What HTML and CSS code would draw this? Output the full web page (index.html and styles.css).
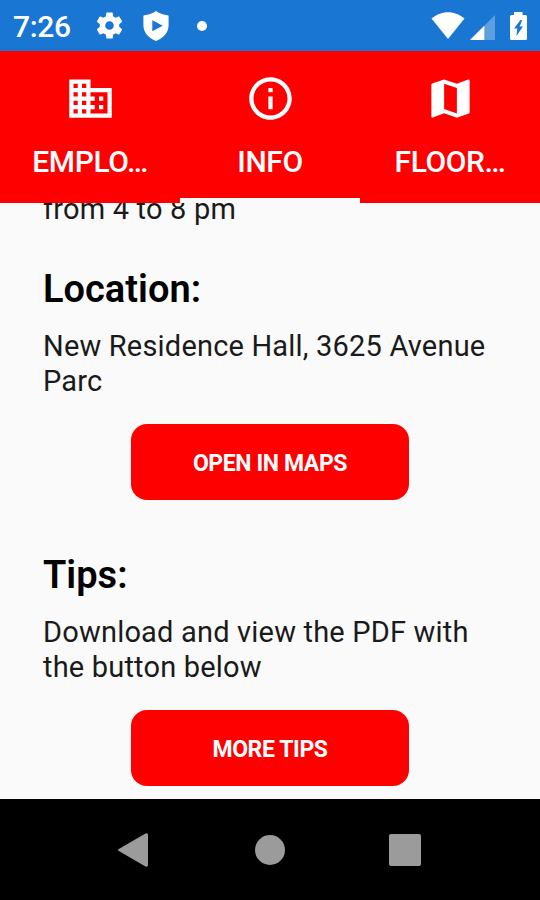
FILE: index.html
```html
<!DOCTYPE html>
<html lang="en">
  <head>
    <meta charset="UTF-8" />
    <meta name="viewport" content="width=device-width, initial-scale=1.0" />
    <title>Info</title>
    <link rel="stylesheet" href="styles.css">
  </head>
  <body>
    <header class="status-bar">
      <span class="clock">7:26</span>
      <svg class="icon-gear" viewBox="2 2 20 20">
        <path fill-rule="evenodd" d="M19.14 12.94c.04-.3.06-.61.06-.94 0-.32-.02-.64-.07-.94l2.03-1.58c.18-.14.23-.41.12-.61l-1.92-3.32c-.12-.22-.37-.29-.59-.22l-2.39.96c-.5-.38-1.03-.7-1.62-.94l-.36-2.54c-.04-.24-.24-.41-.48-.41h-3.84c-.24 0-.43.17-.47.41l-.36 2.54c-.59.24-1.13.57-1.62.94l-2.39-.96c-.22-.08-.47 0-.59.22L2.74 8.87c-.12.21-.08.47.12.61l2.03 1.58c-.05.3-.09.63-.09.94s.02.64.07.94l-2.03 1.58c-.18.14-.23.41-.12.61l1.92 3.32c.12.22.37.29.59.22l2.39-.96c.5.38 1.03.7 1.62.94l.36 2.54c.05.24.24.41.48.41h3.84c.24 0 .44-.17.47-.41l.36-2.54c.59-.24 1.13-.56 1.62-.94l2.39.96c.22.08.47 0 .59-.22l1.92-3.32c.12-.22.07-.47-.12-.61l-2.01-1.58zM12 15.2a3.2 3.2 0 1 1 0-6.4 3.2 3.2 0 0 1 0 6.4z" />
      </svg>
      <svg class="icon-shield" viewBox="0 0 26 30">
        <path fill-rule="evenodd" d="M13 0C9.500 2.500 5 4 1.200 4.200Q.4 4.300.4 5.200V14c0 7.500 5 13 12.600 16 7.600-3 12.600-8.500 12.600-16V5.200q0-.9-.8-1C21 4 16.500 2.500 13 0zM9.300 9.200 19.800 14.700 9.300 20.200z" />
      </svg>
      <span class="dot"></span>
      <div class="status-right">
        <svg class="icon-wifi" viewBox="0 0 34 27">
          <path d="M17 27 .5 6.500C5 2.500 11 .2 17 .2s12 2.300 16.500 6.300z" />
        </svg>
        <svg class="icon-signal" viewBox="0 0 25 25">
          <path class="faded" d="M25 0V25H0z" />
          <path d="M14.300 10.700V25H0z" />
        </svg>
        <svg class="icon-battery" viewBox="0 0 17 28">
          <path fill-rule="evenodd" d="M4 0h8.500v3H15.500Q17 3 17 4.500V26.500Q17 28 15.500 28H1.500Q0 28 0 26.500V4.500Q0 3 1.500 3H4zM10.500 8 4 16.500H7.300L6.400 24 13 14.500H9.600L12.200 8z" />
        </svg>
      </div>
    </header>

    <nav class="tabs">
      <a class="tab">
        <svg viewBox="0 0 24 24">
          <path d="M12 7V3H2v18h20V7H12zM6 19H4v-2h2v2zm0-4H4v-2h2v2zm0-4H4V9h2v2zm0-4H4V5h2v2zm4 12H8v-2h2v2zm0-4H8v-2h2v2zm0-4H8V9h2v2zm0-4H8V5h2v2zm10 12h-8v-2h2v-2h-2v-2h2v-2h-2V9h8v10zm-2-8h-2v2h2v-2zm0 4h-2v2h2v-2z" />
        </svg>
        <span>EMPLO…</span>
      </a>
      <a class="tab active">
        <svg viewBox="0 0 24 24">
          <path d="M11 7h2v2h-2zm0 4h2v6h-2zm1-9C6.480 2 2 6.480 2 12s4.480 10 10 10 10-4.480 10-10S17.520 2 12 2zm0 18c-4.410 0-8-3.590-8-8s3.590-8 8-8 8 3.590 8 8-3.590 8-8 8z" />
        </svg>
        <span>INFO</span>
      </a>
      <a class="tab">
        <svg viewBox="0 0 24 24">
          <path d="M20.500 3l-.16.03L15 5.100 9 3 3.360 4.900c-.21.07-.36.25-.36.48V20.500c0 .28.22.5.5.5l.16-.03L9 18.900l6 2.100 5.640-1.900c.21-.07.36-.25.36-.48V3.500c0-.28-.22-.5-.5-.5zM15 19l-6-2.110V5l6 2.110V19z" />
        </svg>
        <span>FLOOR…</span>
      </a>
    </nav>

    <main>
      <p class="first">from 4 to 8 pm</p>

      <h2>Location:</h2>
      <p>New Residence Hall, 3625 Avenue Parc</p>
      <button>OPEN IN MAPS</button>

      <h2>Tips:</h2>
      <p>Download and view the PDF with the button below</p>
      <button>MORE TIPS</button>
    </main>

    <footer class="nav-bar">
      <svg class="back" viewBox="0 0 30 34">
        <path d="M.8 16 27.500.5Q30-.5 30 2V32Q30 34.500 27.500 33.500L.8 18Q-.6 17 .8 16z" />
      </svg>
      <span class="home"></span>
      <span class="recent"></span>
    </footer>
  </body>
</html>
```

FILE: styles.css
```css
* {
  margin: 0;
  padding: 0;
  box-sizing: border-box;
  font-family: Roboto, sans-serif;
}

body {
  height: 900px;
  display: flex;
  flex-direction: column;
  background-color: #fafafa;
  overflow: hidden;
}

/* Status bar */
.status-bar {
  height: 51px;
  flex-shrink: 0;
  display: flex;
  align-items: center;
  padding-left: 13px;
  background-color: #1976d2;
  color: white;
}

.status-bar svg {
  fill: white;
}

.clock {
  width: 83px;
  font-size: 30px;
  font-weight: 500;
  line-height: 36px;
  letter-spacing: -0.3px;
  padding-top: 2px;
}

.icon-gear {
  width: 27px;
  height: 27px;
}

.icon-shield {
  width: 26px;
  height: 30px;
  margin-left: 19.500px;
}

.dot {
  width: 10px;
  height: 10px;
  margin-left: 28.500px;
  border-radius: 50%;
  background-color: white;
}

.status-right {
  display: flex;
  align-items: flex-end;
  height: 28px;
  margin-left: auto;
  margin-right: 13.500px;
}

.icon-wifi {
  width: 34px;
  height: 27px;
  margin-bottom: 1px;
}

.icon-signal {
  width: 25px;
  height: 25px;
  margin-left: 5px;
}

.icon-signal .faded {
  opacity: 0.3;
}

.icon-battery {
  width: 17px;
  height: 28px;
  margin-left: 15px;
}

/* Tabs */
.tabs {
  height: 151.500px;
  flex-shrink: 0;
  display: flex;
  background-color: #ff0000;
}

.tab {
  flex: 1;
  display: flex;
  flex-direction: column;
  align-items: center;
  padding-top: 22px;
  color: white;
  border-bottom: 5px solid transparent;
}

.tab.active {
  border-bottom-color: #fafafa;
}

.tab svg {
  width: 51px;
  height: 51px;
  fill: white;
}

.tab span {
  margin-top: 20px;
  font-size: 30px;
  font-weight: 500;
  line-height: 36px;
  letter-spacing: -0.4px;
}

/* Content */
main {
  flex: 1;
  min-height: 0;
  padding: 0 43px;
  display: flex;
  flex-direction: column;
  overflow: hidden;
}

h2 {
  margin-top: 53px;
  font-size: 38px;
  font-weight: 600;
  line-height: 44px;
}

p {
  margin-top: 18.500px;
  font-size: 29px;
  font-weight: 400;
  line-height: 34.300px;
  letter-spacing: 0.190px;
  color: #1a1a1a;
}

p.first {
  margin-top: -11px;
}

.first + h2 {
  margin-top: 41px;
}

button {
  align-self: center;
  flex-shrink: 0;
  width: 278px;
  height: 75.500px;
  margin-top: 26.500px;
  padding-top: 2px;
  border: none;
  border-radius: 16px;
  background-color: #ff0000;
  color: white;
  font-size: 23px;
  font-weight: 700;
  letter-spacing: -0.4px;
}

/* Android navigation */
.nav-bar {
  height: 101px;
  flex-shrink: 0;
  display: flex;
  align-items: center;
  padding-left: 118px;
  background-color: black;
}

.back {
  width: 30px;
  height: 34px;
  fill: #9b9b9b;
}

.home {
  width: 30px;
  height: 30px;
  margin-left: 107px;
  border-radius: 50%;
  background-color: #9b9b9b;
}

.recent {
  width: 32px;
  height: 32px;
  margin-left: 104px;
  border-radius: 2px;
  background-color: #9b9b9b;
}
```
